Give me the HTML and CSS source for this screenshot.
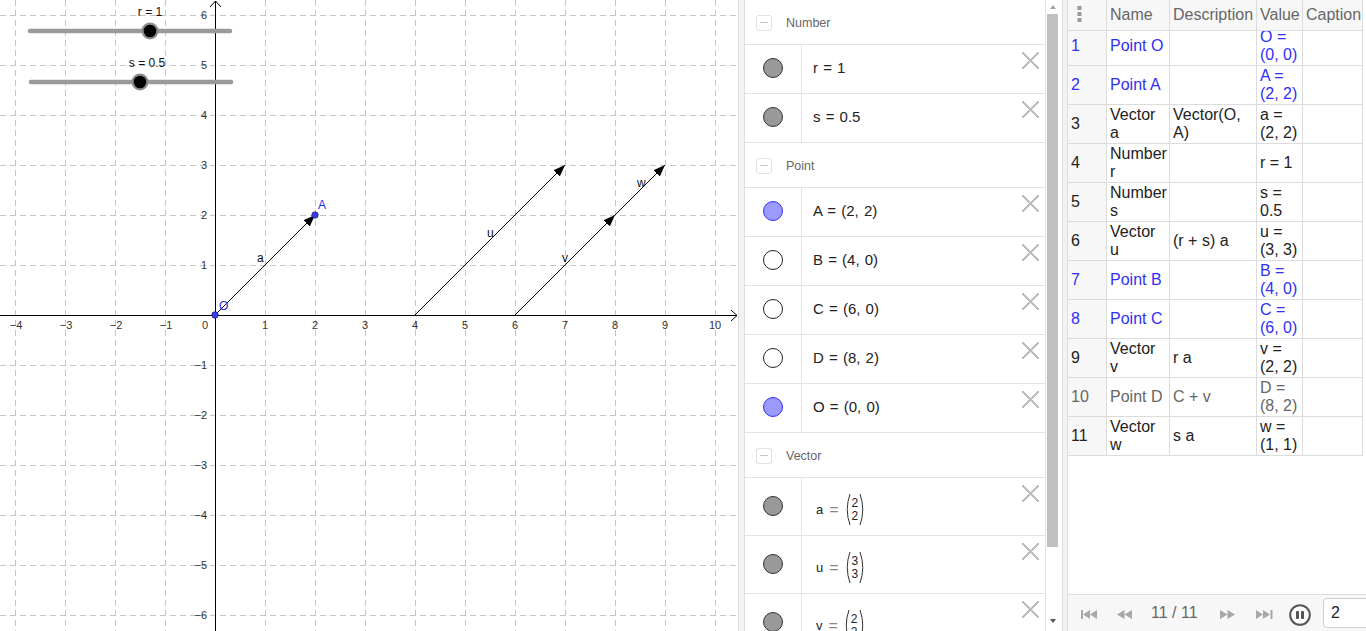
FILE: index.html
```html
<!DOCTYPE html>
<html>
<head>
<meta charset="utf-8">
<title>Vectors</title>
<link rel="stylesheet" href="styles.css">
</head>
<body>
<div class="app">
  <div class="graphics">
    <svg class="plot" width="738" height="631" viewBox="0 0 738 631">
      <defs>
        <marker id="ah" markerWidth="12" markerHeight="9" refX="12" refY="4.5" orient="auto" markerUnits="userSpaceOnUse">
          <path d="M0,0 L12,4.5 L0,9 Z" fill="#000"/>
        </marker>
      </defs>
      <g stroke="#c4c4c4" stroke-width="1" stroke-dasharray="6 4" fill="none">
        <path d="M15.5 0V631M65.5 0V631M115.5 0V631M165.5 0V631M265.5 0V631M315.5 0V631M365.5 0V631M415.5 0V631M465.5 0V631M515.5 0V631M565.5 0V631M615.5 0V631M665.5 0V631M715.5 0V631"/>
        <path d="M0 15.5H738M0 65.5H738M0 115.5H738M0 165.5H738M0 215.5H738M0 265.5H738M0 365.5H738M0 415.5H738M0 465.5H738M0 515.5H738M0 565.5H738M0 615.5H738"/>
      </g>
      <g stroke="#000" stroke-width="1" fill="none">
        <path d="M0 315.5H737M215.5 631V1"/>
        <path d="M731 310L737 315.5L731 321M210 7L215.5 1L221 7"/>
      </g>
      <g class="axis-num" text-anchor="middle">
        <text x="16" y="329">−4</text><text x="66" y="329">−3</text><text x="116" y="329">−2</text><text x="166" y="329">−1</text>
        <text x="265" y="329">1</text><text x="315" y="329">2</text><text x="365" y="329">3</text><text x="415" y="329">4</text>
        <text x="465" y="329">5</text><text x="515" y="329">6</text><text x="565" y="329">7</text><text x="615" y="329">8</text>
        <text x="665" y="329">9</text><text x="715" y="329">10</text>
      </g>
      <g class="axis-num" text-anchor="end">
        <text x="208" y="329">0</text>
        <text x="207" y="19">6</text><text x="207" y="69">5</text><text x="207" y="119">4</text><text x="207" y="169">3</text>
        <text x="207" y="219">2</text><text x="207" y="269">1</text><text x="207" y="369">−1</text><text x="207" y="419">−2</text>
        <text x="207" y="469">−3</text><text x="207" y="519">−4</text><text x="207" y="569">−5</text><text x="207" y="619">−6</text>
      </g>
      <g stroke="#000" stroke-width="1" marker-end="url(#ah)">
        <line x1="215" y1="315" x2="315" y2="215"/>
        <line x1="415" y1="315" x2="565" y2="165"/>
        <line x1="515" y1="315" x2="615" y2="215"/>
        <line x1="615" y1="215" x2="665" y2="165"/>
      </g>
      <g class="obj-label">
        <text x="257" y="262">a</text>
        <text x="487" y="237">u</text>
        <text x="562" y="262">v</text>
        <text x="637" y="187">w</text>
      </g>
      <g class="pt-label">
        <text x="219" y="310">O</text>
        <text x="318" y="209">A</text>
      </g>
      <circle cx="215" cy="315" r="3.2" fill="#3b3bf0" stroke="#1d1d8c" stroke-width="0.8"/>
      <circle cx="315" cy="215" r="3.2" fill="#3b3bf0" stroke="#1d1d8c" stroke-width="0.8"/>
      <g stroke="#9a9a9a" stroke-width="4.5" stroke-linecap="round">
        <line x1="30" y1="31" x2="230" y2="31"/>
        <line x1="31" y1="82" x2="231" y2="82"/>
      </g>
      <circle cx="150" cy="31" r="8.5" fill="#8c8c8c"/>
      <circle cx="150" cy="31" r="6.3" fill="#000"/>
      <circle cx="140" cy="82" r="8.5" fill="#8c8c8c"/>
      <circle cx="140" cy="82" r="6.3" fill="#000"/>
      <g class="slider-label" text-anchor="middle">
        <text x="150" y="16">r = 1</text>
        <text x="147" y="67">s = 0.5</text>
      </g>
    </svg>
  </div>

  <div class="splitter"></div>

  <div class="algebra">
    <div class="av-list">
      <div class="group"><span class="toggle"></span><span class="group-name">Number</span></div>
      <div class="item">
        <div class="marble-col"><span class="marble gray"></span></div>
        <div class="item-body"><span class="expr">r = 1</span></div>
        <span class="close"></span>
      </div>
      <div class="item">
        <div class="marble-col"><span class="marble gray"></span></div>
        <div class="item-body"><span class="expr">s = 0.5</span></div>
        <span class="close"></span>
      </div>

      <div class="group"><span class="toggle"></span><span class="group-name">Point</span></div>
      <div class="item">
        <div class="marble-col"><span class="marble blue"></span></div>
        <div class="item-body"><span class="expr">A = (2, 2)</span></div>
        <span class="close"></span>
      </div>
      <div class="item">
        <div class="marble-col"><span class="marble empty"></span></div>
        <div class="item-body"><span class="expr">B = (4, 0)</span></div>
        <span class="close"></span>
      </div>
      <div class="item">
        <div class="marble-col"><span class="marble empty"></span></div>
        <div class="item-body"><span class="expr">C = (6, 0)</span></div>
        <span class="close"></span>
      </div>
      <div class="item">
        <div class="marble-col"><span class="marble empty"></span></div>
        <div class="item-body"><span class="expr">D = (8, 2)</span></div>
        <span class="close"></span>
      </div>
      <div class="item">
        <div class="marble-col"><span class="marble blue"></span></div>
        <div class="item-body"><span class="expr">O = (0, 0)</span></div>
        <span class="close"></span>
      </div>

      <div class="group"><span class="toggle"></span><span class="group-name">Vector</span></div>
      <div class="item vec">
        <div class="marble-col"><span class="marble gray"></span></div>
        <div class="item-body">
          <span class="cvec"><span class="vname">a</span><span class="veq">=</span><svg class="paren" width="7" height="33" viewBox="0 0 7 33"><path d="M6 1Q0.5 16.5 6 32"/></svg><span class="vstack"><span>2</span><span>2</span></span><svg class="paren" width="7" height="33" viewBox="0 0 7 33"><path d="M1 1Q6.5 16.5 1 32"/></svg></span>
        </div>
        <span class="close"></span>
      </div>
      <div class="item vec">
        <div class="marble-col"><span class="marble gray"></span></div>
        <div class="item-body">
          <span class="cvec"><span class="vname">u</span><span class="veq">=</span><svg class="paren" width="7" height="33" viewBox="0 0 7 33"><path d="M6 1Q0.5 16.5 6 32"/></svg><span class="vstack"><span>3</span><span>3</span></span><svg class="paren" width="7" height="33" viewBox="0 0 7 33"><path d="M1 1Q6.5 16.5 1 32"/></svg></span>
        </div>
        <span class="close"></span>
      </div>
      <div class="item vec">
        <div class="marble-col"><span class="marble gray"></span></div>
        <div class="item-body">
          <span class="cvec"><span class="vname">v</span><span class="veq">=</span><svg class="paren" width="7" height="33" viewBox="0 0 7 33"><path d="M6 1Q0.5 16.5 6 32"/></svg><span class="vstack"><span>2</span><span>2</span></span><svg class="paren" width="7" height="33" viewBox="0 0 7 33"><path d="M1 1Q6.5 16.5 1 32"/></svg></span>
        </div>
        <span class="close"></span>
      </div>
    </div>
    <div class="av-scroll">
      <span class="arrow up"></span>
      <div class="thumb"></div>
      <span class="arrow down"></span>
    </div>
  </div>

  <div class="splitter thin"></div>

  <div class="table-panel">
    <div class="sheet">
      <div class="srow head">
        <div class="c rh corner"><svg width="5" height="16" viewBox="0 0 5 16"><rect x="0.5" y="0" width="4" height="4"/><rect x="0.5" y="6" width="4" height="4"/><rect x="0.5" y="12" width="4" height="4"/></svg></div>
        <div class="c"><span>Name</span></div>
        <div class="c"><span>Description</span></div>
        <div class="c"><span>Value</span></div>
        <div class="c"><span>Caption</span></div>
      </div>
      <div class="rows-clip">
        <div class="rows">
          <div class="srow blue"><div class="c rh"><span>1</span></div><div class="c"><span>Point O</span></div><div class="c"></div><div class="c"><span>O =<br>(0, 0)</span></div><div class="c"></div></div>
          <div class="srow blue"><div class="c rh"><span>2</span></div><div class="c"><span>Point A</span></div><div class="c"></div><div class="c"><span>A =<br>(2, 2)</span></div><div class="c"></div></div>
          <div class="srow"><div class="c rh"><span>3</span></div><div class="c"><span>Vector<br>a</span></div><div class="c"><span>Vector(O,<br>A)</span></div><div class="c"><span>a =<br>(2, 2)</span></div><div class="c"></div></div>
          <div class="srow"><div class="c rh"><span>4</span></div><div class="c"><span>Number<br>r</span></div><div class="c"></div><div class="c"><span>r = 1</span></div><div class="c"></div></div>
          <div class="srow"><div class="c rh"><span>5</span></div><div class="c"><span>Number<br>s</span></div><div class="c"></div><div class="c"><span>s =<br>0.5</span></div><div class="c"></div></div>
          <div class="srow"><div class="c rh"><span>6</span></div><div class="c"><span>Vector<br>u</span></div><div class="c"><span>(r + s) a</span></div><div class="c"><span>u =<br>(3, 3)</span></div><div class="c"></div></div>
          <div class="srow blue"><div class="c rh"><span>7</span></div><div class="c"><span>Point B</span></div><div class="c"></div><div class="c"><span>B =<br>(4, 0)</span></div><div class="c"></div></div>
          <div class="srow blue"><div class="c rh"><span>8</span></div><div class="c"><span>Point C</span></div><div class="c"></div><div class="c"><span>C =<br>(6, 0)</span></div><div class="c"></div></div>
          <div class="srow"><div class="c rh"><span>9</span></div><div class="c"><span>Vector<br>v</span></div><div class="c"><span>r a</span></div><div class="c"><span>v =<br>(2, 2)</span></div><div class="c"></div></div>
          <div class="srow grayrow"><div class="c rh"><span>10</span></div><div class="c"><span>Point D</span></div><div class="c"><span>C + v</span></div><div class="c"><span>D =<br>(8, 2)</span></div><div class="c"></div></div>
          <div class="srow"><div class="c rh"><span>11</span></div><div class="c"><span>Vector<br>w</span></div><div class="c"><span>s a</span></div><div class="c"><span>w =<br>(1, 1)</span></div><div class="c"></div></div>
        </div>
      </div>
    </div>
    <div class="nav">
      <svg class="nav-ic first" width="17" height="9" viewBox="0 0 17 9"><rect x="0" y="0" width="2" height="9"/><path d="M2 4.5L9 0V9ZM9 4.5L16 0V9Z"/></svg>
      <svg class="nav-ic prev" width="17" height="9" viewBox="0 0 17 9"><path d="M1 4.5L8.5 0V9ZM8.5 4.5L16 0V9Z"/></svg>
      <span class="nav-count">11 / 11</span>
      <svg class="nav-ic next" width="17" height="9" viewBox="0 0 17 9"><path d="M16 4.5L8.5 0V9ZM8.5 4.5L1 0V9Z"/></svg>
      <svg class="nav-ic last" width="17" height="9" viewBox="0 0 17 9"><path d="M0 0L7 4.5L0 9ZM7 0L14 4.5L7 9Z"/><rect x="14.5" y="0" width="2" height="9"/></svg>
      <svg class="pause" width="22" height="22" viewBox="0 0 22 22"><circle cx="11" cy="11" r="9.8" fill="#fff" stroke="#555" stroke-width="2"/><rect x="7" y="7" width="3" height="8" rx="0.8" fill="#555"/><rect x="12" y="7" width="3" height="8" rx="0.8" fill="#555"/></svg>
      <span class="speed">2</span>
    </div>
  </div>
</div>
</body>
</html>
```

FILE: styles.css
```css
* { box-sizing: border-box; }
html, body { margin: 0; padding: 0; }
body {
  width: 1366px;
  height: 631px;
  overflow: hidden;
  background: #fff;
  font-family: "Liberation Sans", Arial, sans-serif;
  color: #222;
}
.app { display: flex; height: 631px; }

/* graphics view */
.graphics { width: 738px; flex: none; height: 631px; overflow: hidden; }
.plot { display: block; }
.axis-num { font-family: "Liberation Sans", Arial, sans-serif; font-size: 11px; fill: #333; }
.obj-label { font-family: "Liberation Sans", Arial, sans-serif; font-size: 12px; fill: #111; }
.pt-label { font-family: "Liberation Sans", Arial, sans-serif; font-size: 12px; fill: #2a2af0; }
.slider-label { font-family: "Liberation Sans", Arial, sans-serif; font-size: 12px; fill: #111; }

/* splitters */
.splitter {
  width: 7px; flex: none; height: 631px;
  background: #f2f2f2;
  border-left: 1px solid #dedede;
  border-right: 1px solid #dedede;
}
.splitter.thin { width: 6px; }

/* algebra view */
.algebra { width: 317px; flex: none; height: 631px; display: flex; overflow: hidden; }
.av-list { width: 300px; flex: none; }
.group {
  height: 45px;
  border-bottom: 1px solid #e4e4e4;
  display: flex;
  align-items: center;
  padding-left: 11px;
  padding-top: 1px;
}
.toggle {
  width: 16px; height: 16px;
  border: 1px solid #e2e2e2;
  border-radius: 3px;
  display: flex; align-items: center; justify-content: center;
  flex: none;
}
.toggle::before { content: ""; width: 8px; height: 1px; background: #c8c8c8; }
.group-name { margin-left: 14px; font-size: 12.5px; color: #666; }

.item {
  height: 49px;
  border-bottom: 1px solid #e4e4e4;
  display: flex;
}
.item.vec { height: 58px; }
.marble-col {
  width: 57px; flex: none;
  border-right: 1px solid #e4e4e4;
  display: flex; align-items: center; justify-content: center;
  padding-bottom: 3px;
  padding-right: 1px;
}
.item.vec .marble-col { padding-bottom: 1px; }
.marble {
  width: 20px; height: 20px; border-radius: 50%;
  border: 1px solid #333;
}
.marble.gray { background: #999; }
.marble.blue { background: #9a9aff; border-color: #3030ee; }
.marble.empty { background: #fff; border-color: #222; }
.item-body {
  flex: 1;
  display: flex; align-items: center;
  padding-left: 11px;
  padding-bottom: 3px;
}
.item.vec .item-body { padding-bottom: 0; padding-top: 6px; }
.expr { font-size: 15px; color: #222; word-spacing: 1px; }
.close {
  width: 17px; height: 17px; flex: none;
  margin: 7px 6px 0 0;
  background:
    linear-gradient(45deg, transparent 46%, #bdbdbd 46%, #bdbdbd 54%, transparent 54%),
    linear-gradient(-45deg, transparent 46%, #bdbdbd 46%, #bdbdbd 54%, transparent 54%);
}
.cvec { display: flex; align-items: center; padding-left: 3px; }
.vname { font-size: 13px; color: #222; }
.veq { font-size: 16px; color: #888; margin: 0 5px 0 6px; }
.paren { display: block; }
.paren path { fill: none; stroke: #333; stroke-width: 1; }
.vstack { display: flex; flex-direction: column; font-size: 12px; line-height: 13px; color: #222; padding: 0 1px; }

.av-scroll {
  width: 17px; flex: none;
  border-left: 1px solid #e4e4e4;
  display: flex; flex-direction: column; align-items: flex-start;
}
.arrow { width: 0; height: 0; margin-left: 4px; border-left: 3.5px solid transparent; border-right: 3.5px solid transparent; }
.arrow.up { margin-top: 5px; border-bottom: 4px solid #a3a3a3; }
.arrow.down { margin-top: auto; margin-bottom: 8px; border-top: 4px solid #555; }
.thumb { width: 11px; height: 533px; margin-left: 1px; margin-top: 5px; background: #c1c1c1; }

/* table view */
.table-panel { width: 298px; flex: none; height: 631px; display: flex; flex-direction: column; overflow: hidden; }
.sheet { flex: 1; overflow: hidden; }
.srow {
  display: grid;
  grid-template-columns: 39px 63px 87px 46px 60px;
  width: 295px;
  height: 39px;
  border-bottom: 1px solid #dcdcdc;
  font-size: 16px;
  line-height: 18px;
  color: #222;
}
.srow.head { height: 31px; background: #f7f7f7; color: #666; }
.c {
  border-right: 1px solid #dcdcdc;
  display: flex; align-items: center;
  padding: 1px 1px 1px 3px;
  white-space: nowrap;
  overflow: hidden;
}
.c.rh { background: #f7f7f7; }
.corner { justify-content: flex-start; padding-left: 9px; }
.corner svg { fill: #999; display: block; margin-bottom: 2px; }
.srow.blue { color: #3030f2; }
.srow.grayrow { color: #666; }
.rows-clip { overflow: hidden; height: 600px; }
.rows { margin-top: -4px; }

/* navigation bar */
.nav {
  height: 37px; flex: none;
  border-top: 1px solid #dedede;
  background: #f7f7f7;
  display: flex; align-items: center;
  padding-left: 13px;
  overflow: hidden;
}
.nav-ic { fill: #a8a8a8; display: block; flex: none; margin-top: 2px; }
.nav-ic.prev { margin-left: 18px; }
.nav-count { margin-left: 18px; font-size: 16px; color: #666; flex: none; width: 50px; }
.nav-ic.next { margin-left: 18px; }
.nav-ic.last { margin-left: 20px; }
.pause { display: block; flex: none; margin-left: 16px; margin-top: 3px; }
.speed {
  flex: none;
  margin-left: 12px;
  width: 50px; height: 30px;
  border: 1px solid #cfcfcf;
  border-radius: 4px;
  background: #fff;
  font-size: 16px;
  color: #222;
  padding-left: 7px;
  display: flex; align-items: center;
}
```
